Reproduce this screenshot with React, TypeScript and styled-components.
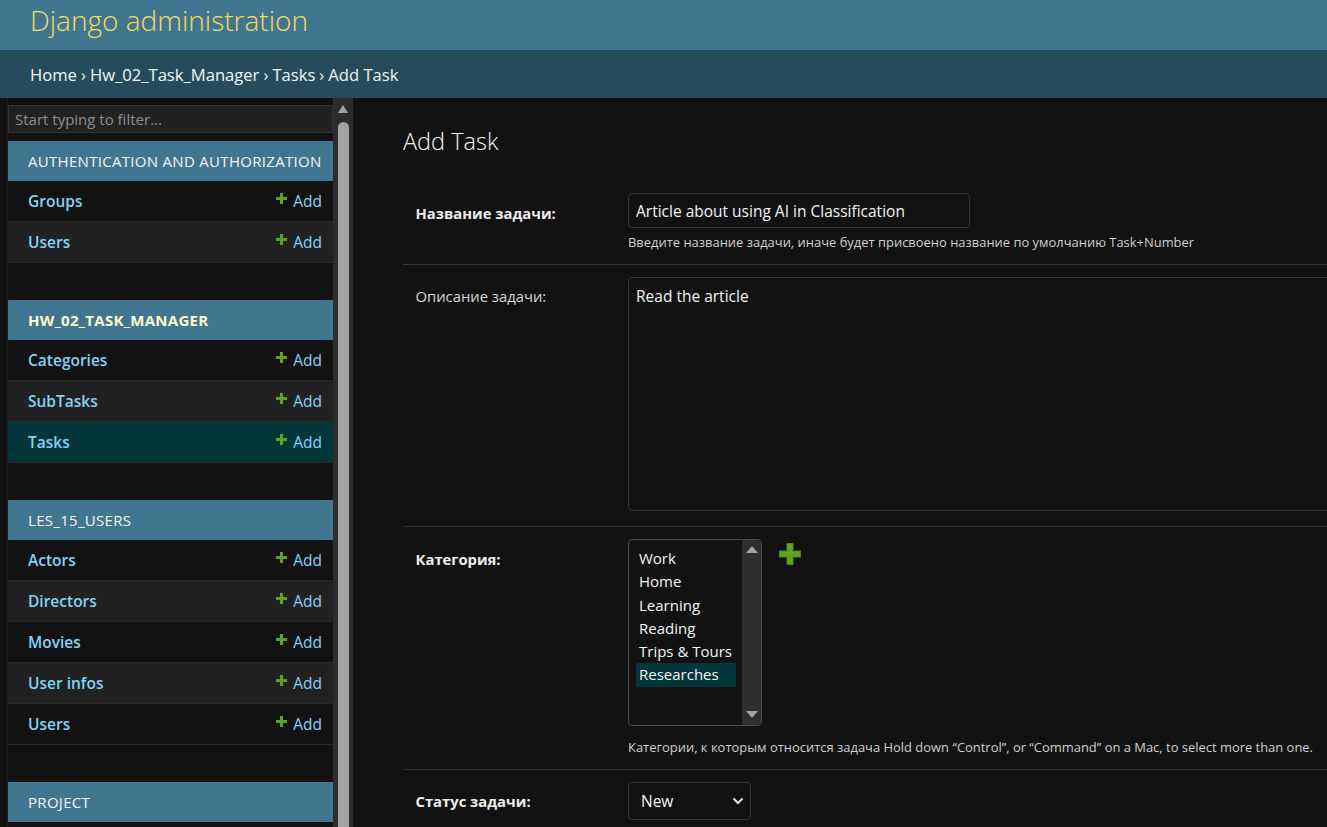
import React from "react";
import styled, { createGlobalStyle } from "styled-components";

const GlobalStyle = createGlobalStyle`
    html, body {
        margin: 0;
        padding: 0;
        background: #121212;
        overflow: hidden;
    }
    body {
        font-family: "Open Sans", "Noto Sans", sans-serif;
        color: #eeeeee;
    }
    * {
        box-sizing: border-box;
    }
`;

const Page = styled.div`
    display: flex;
    flex-direction: column;
    height: 100vh;
    overflow: hidden;
`;

const Header = styled.header`
    height: 50px;
    flex-shrink: 0;
    display: flex;
    align-items: center;
    padding: 0 30px;
    background: #417690;
`;

const SiteName = styled.h1`
    margin: 0 0 10px;
    font-size: 28px;
    font-weight: 300;
    color: #f5dd5d;
`;

const Breadcrumbs = styled.nav`
    height: 48px;
    flex-shrink: 0;
    display: flex;
    align-items: center;
    padding: 0 30px 0 30px;
    background: #264b5d;
    font-size: 16.6px;
    color: #f4f4f4;
`;

const Crumb = styled.a`
    color: #f4f8fa;
    text-decoration: none;
`;

const Sep = styled.span`
    margin: 0 4px;
`;

const Body = styled.div`
    flex: 1;
    display: flex;
    min-height: 0;
`;

const ToggleCol = styled.div`
    width: 8px;
    flex-shrink: 0;
    border-right: 1px solid #1e1e1e;
`;

const Sidebar = styled.aside`
    width: 325px;
    flex-shrink: 0;
    padding-top: 7px;
    overflow: hidden;
`;

const Filter = styled.input`
    display: block;
    width: 100%;
    height: 28px;
    margin: 0 0 8px;
    padding: 0 7px 0 6px;
    background: #212121;
    border: 1px solid #333;
    font-family: inherit;
    font-size: 15px;
    color: #eee;
    &::placeholder {
        color: #8f8f8f;
    }
`;

const Module = styled.div`
    margin-bottom: 37px;
`;

const Caption = styled.div<{ $current?: boolean }>`
    height: 40px;
    line-height: 40px;
    padding: 0 20px;
    background: #417690;
    font-size: 15px;
    letter-spacing: 0.3px;
    white-space: nowrap;
    overflow: hidden;
    text-transform: uppercase;
    font-weight: ${(p) => (p.$current ? 700 : 400)};
    color: ${(p) => (p.$current ? "#ffffcc" : "#f4f4f4")};
`;

const ModelRow = styled.div<{ $alt?: boolean; $current?: boolean }>`
    height: 41px;
    display: flex;
    align-items: center;
    justify-content: space-between;
    padding: 0 11px 0 20px;
    border-bottom: 1px solid #2a2a2a;
    background: ${(p) => (p.$current ? "#00363a" : p.$alt ? "#212121" : "#121212")};
`;

const ModelLink = styled.a`
    color: #81d4fa;
    font-size: 15.5px;
    font-weight: 600;
    text-decoration: none;
`;

const AddLink = styled.a`
    display: flex;
    align-items: center;
    gap: 6px;
    color: #81d4fa;
    font-size: 15.5px;
    text-decoration: none;
    svg {
        margin-top: -6px;
    }
`;

const ScrollTrack = styled.div`
    width: 20px;
    flex-shrink: 0;
    display: flex;
    flex-direction: column;
    align-items: center;
    background: #2c2c2c;
    padding-top: 7px;
`;

const ScrollArrow = styled.div`
    width: 0;
    height: 0;
    border-left: 5.5px solid transparent;
    border-right: 5.5px solid transparent;
    border-bottom: 8px solid #a3a3a3;
`;

const ScrollThumb = styled.div`
    width: 11px;
    flex: 1;
    margin-top: 9px;
    border-radius: 6px 6px 0 0;
    background: #a3a3a3;
`;

const Main = styled.main`
    flex: 1;
    min-width: 0;
    overflow: hidden;
    padding: 28px 0 0 50px;
`;

const Title = styled.h1`
    margin: 0 0 25px;
    font-size: 23.5px;
    line-height: 30px;
    font-weight: 300;
    color: #f5f5f5;
`;

const Fieldset = styled.div`
    width: 1000px;
`;

const Row = styled.div<{ $last?: boolean }>`
    display: flex;
    padding: 12px 12.5px 12.5px;
    border-bottom: ${(p) => (p.$last ? "none" : "1px solid #333")};
`;

const Label = styled.label<{ $required?: boolean }>`
    width: 212.5px;
    flex-shrink: 0;
    padding-top: 9.5px;
    font-size: 14.8px;
    font-weight: ${(p) => (p.$required ? 700 : 400)};
    color: ${(p) => (p.$required ? "#eeeeee" : "#d8d8d8")};
`;

const Field = styled.div`
    display: flex;
    flex-direction: column;
    align-items: flex-start;
`;

const TextInput = styled.input`
    width: 342px;
    height: 35px;
    padding: 0 7px;
    background: #121212;
    border: 1px solid #353535;
    border-radius: 4px;
    font-family: inherit;
    font-size: 15.5px;
    color: #f5f5f5;
`;

const TextArea = styled.textarea`
    width: 760px;
    height: 234px;
    margin-bottom: 3px;
    padding: 7px 7px;
    background: #121212;
    border: 1px solid #353535;
    border-radius: 4px;
    font-family: inherit;
    font-size: 15.5px;
    color: #f5f5f5;
    resize: none;
`;

const Help = styled.div<{ $gap: number }>`
    margin-top: ${(p) => p.$gap}px;
    font-size: 12.95px;
    color: #d0d0d0;
    white-space: nowrap;
`;

const Related = styled.div`
    display: flex;
    align-items: flex-start;
    gap: 16px;
`;

const MultiBox = styled.div`
    width: 134px;
    height: 187px;
    display: flex;
    background: #121212;
    border: 1px solid #4a4a4a;
    border-radius: 4px;
    overflow: hidden;
`;

const OptionList = styled.div`
    flex: 1;
    padding: 7px 6px 0 7px;
`;

const Option = styled.div<{ $selected?: boolean }>`
    height: 23.3px;
    line-height: 23px;
    padding-left: 3px;
    font-size: 15px;
    color: #f5f5f5;
    white-space: nowrap;
    background: ${(p) => (p.$selected ? "#00363a" : "transparent")};
`;

const BoxScroll = styled.div`
    width: 19px;
    display: flex;
    flex-direction: column;
    align-items: center;
    justify-content: space-between;
    padding: 6px 0 7px;
    background: #2f2f2f;
`;

const BoxArrow = styled.div<{ $down?: boolean }>`
    width: 0;
    height: 0;
    border-left: 6px solid transparent;
    border-right: 6px solid transparent;
    ${(p) =>
        p.$down
            ? "border-top: 7px solid #a3a3a3;"
            : "border-bottom: 7px solid #a3a3a3;"}
`;

const PlusLink = styled.a`
    display: flex;
    margin-top: 3px;
`;

const SelectBox = styled.div`
    width: 123px;
    height: 38px;
    display: flex;
    align-items: center;
    justify-content: space-between;
    padding: 0 5px 0 12px;
    background: #121212;
    border: 1px solid #353535;
    border-radius: 4px;
    font-size: 15.5px;
    color: #f5f5f5;
`;

const modules = [
    { name: "Authentication and Authorization", models: ["Groups", "Users"] },
    { name: "Hw_02_Task_Manager", current: true, models: ["Categories", "SubTasks", "Tasks"], active: "Tasks" },
    { name: "Les_15_Users", models: ["Actors", "Directors", "Movies", "User infos", "Users"] },
    { name: "Project", models: [] as string[] },
];

const categories = ["Work", "Home", "Learning", "Reading", "Trips & Tours", "Researches"];

function SmallPlus() {
    return (
        <svg width="11" height="11" viewBox="0 0 11 11">
            <path d="M4 0h3v4h4v3H7v4H4V7H0V4h4z" fill="#5fa225" />
        </svg>
    );
}

function BigPlus() {
    return (
        <svg width="24" height="24" viewBox="0 0 24 24">
            <path
                d="M9 1.5h6v7.5h7.5v6H15v7.5H9V15H1.5V9H9z"
                fill="#5fa225"
                stroke="#4a8a1a"
                strokeWidth="1"
                strokeLinejoin="round"
            />
        </svg>
    );
}

function Chevron() {
    return (
        <svg width="14" height="14" viewBox="0 0 14 14">
            <path d="M2.5 4.5L7 9l4.5-4.5" fill="none" stroke="#e8e8e8" strokeWidth="2" />
        </svg>
    );
}

export default function App() {
    return (
        <Page>
            <GlobalStyle />
            <Header>
                <SiteName>Django administration</SiteName>
            </Header>
            <Breadcrumbs>
                <Crumb>Home</Crumb>
                <Sep>›</Sep>
                <Crumb>Hw_02_Task_Manager</Crumb>
                <Sep>›</Sep>
                <Crumb>Tasks</Crumb>
                <Sep>›</Sep>
                Add Task
            </Breadcrumbs>
            <Body>
                <ToggleCol />
                <Sidebar>
                    <Filter placeholder="Start typing to filter..." />
                    {modules.map((m) => (
                        <Module key={m.name}>
                            <Caption $current={m.current}>{m.name}</Caption>
                            {m.models.map((model, i) => (
                                <ModelRow key={model} $alt={i % 2 === 1} $current={m.active === model}>
                                    <ModelLink>{model}</ModelLink>
                                    <AddLink>
                                        <SmallPlus />
                                        Add
                                    </AddLink>
                                </ModelRow>
                            ))}
                        </Module>
                    ))}
                </Sidebar>
                <ScrollTrack>
                    <ScrollArrow />
                    <ScrollThumb />
                </ScrollTrack>
                <Main>
                    <Title>Add Task</Title>
                    <Fieldset>
                        <Row>
                            <Label $required>Название задачи:</Label>
                            <Field>
                                <TextInput defaultValue="Article about using AI in Classification" />
                                <Help $gap={5}>
                                    Введите название задачи, иначе будет присвоено название по умолчанию Task+Number
                                </Help>
                            </Field>
                        </Row>
                        <Row>
                            <Label>Описание задачи:</Label>
                            <Field>
                                <TextArea defaultValue="Read the article" />
                            </Field>
                        </Row>
                        <Row>
                            <Label $required>Категория:</Label>
                            <Field>
                                <Related>
                                    <MultiBox>
                                        <OptionList>
                                            {categories.map((c) => (
                                                <Option key={c} $selected={c === "Researches"}>
                                                    {c}
                                                </Option>
                                            ))}
                                        </OptionList>
                                        <BoxScroll>
                                            <BoxArrow />
                                            <BoxArrow $down />
                                        </BoxScroll>
                                    </MultiBox>
                                    <PlusLink>
                                        <BigPlus />
                                    </PlusLink>
                                </Related>
                                <Help $gap={12}>
                                    Категории, к которым относится задача Hold down “Control”, or “Command” on a Mac, to
                                    select more than one.
                                </Help>
                            </Field>
                        </Row>
                        <Row $last>
                            <Label $required>Статус задачи:</Label>
                            <Field>
                                <SelectBox>
                                    New
                                    <Chevron />
                                </SelectBox>
                            </Field>
                        </Row>
                    </Fieldset>
                </Main>
            </Body>
        </Page>
    );
}
